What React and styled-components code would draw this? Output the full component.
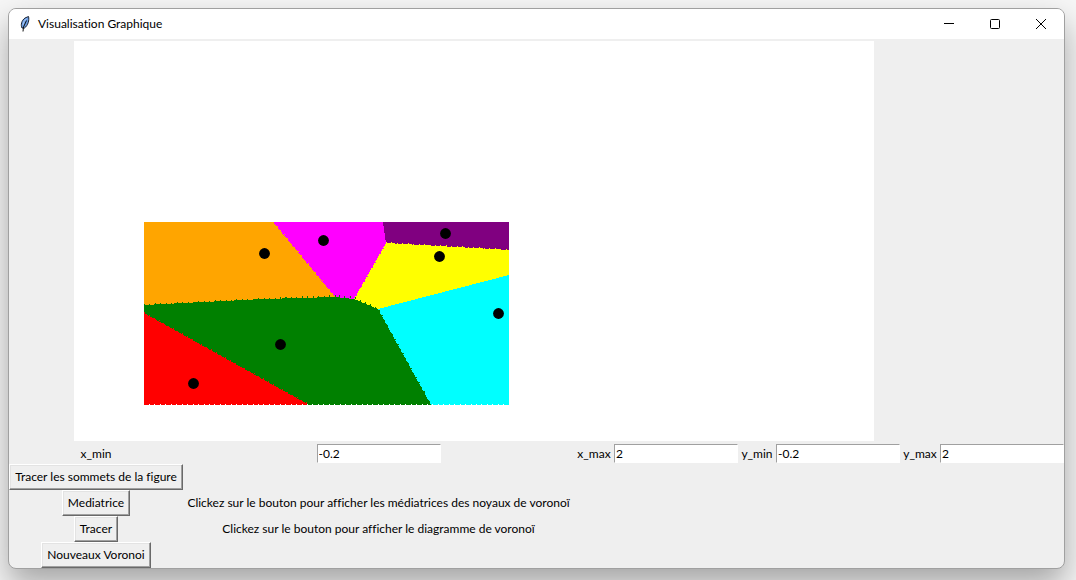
import React, { useState } from 'react'
import styled, { createGlobalStyle } from 'styled-components';

const GlobalStyle = createGlobalStyle`
    * {
        box-sizing: border-box;
    }
    body {
        margin: 0;
        background: #f6f6f6;
        overflow: hidden;
        font-family: Lato, "Open Sans", sans-serif;
        font-size: 12px;
        font-variant-ligatures: none;
        color: #000;
    }
`;

const Desktop = styled.div`
    min-height: 100vh;
    padding: 8px 11px 11px 8px;
`;

const Window = styled.main`
    border: 1px solid #a0a0a0;
    border-radius: 8px;
    overflow: hidden;
    background: #efefef;
    box-shadow: 0 16px 32px rgba(0, 0, 0, 0.33);
`;

const TitleBar = styled.header`
    display: flex;
    align-items: center;
    height: 30px;
    padding-left: 9px;
    gap: 6px;
    background: #fff;
`;

const Title = styled.h1`
    flex: 1;
    margin: 0;
    font-size: 12px;
    font-weight: 400;
    line-height: 16px;
`;

const WindowControls = styled.div`
    display: flex;
`;

const WindowButton = styled.button`
    display: flex;
    align-items: center;
    justify-content: center;
    width: 46px;
    height: 30px;
    padding: 0;
    border: none;
    background: transparent;
`;

const Grid = styled.div`
    display: grid;
    grid-template-columns: 174px minmax(0, 1fr) 40px 124px 38px 124px 40px 124px;
    grid-template-rows: auto 21px repeat(4, 26px);
    align-items: center;
    justify-items: center;
`;

const Canvas = styled.div`
    grid-column: 1 / span 7;
    padding: 2px 4px 2px 2px;
    svg {
        display: block;
        width: 800px;
        max-width: 100%;
        background: #fff;
    }
`;

const Label = styled.label`
    line-height: 16px;
    white-space: nowrap;
`;

const Entry = styled.input`
    width: 124px;
    height: 19px;
    padding: 0 1px;
    border: 1px solid #fff;
    border-top-color: #a0a0a0;
    border-left-color: #a0a0a0;
    background: #fff;
    font: inherit;
    outline: none;
`;

const PushButton = styled.button`
    grid-column: 1;
    height: 26px;
    padding: 0 5px;
    border: 1px solid #696969;
    border-top-color: #fff;
    border-left-color: #fff;
    background: #efefef;
    box-shadow: inset -1px -1px 0 #a0a0a0, inset 1px 1px 0 #e3e3e3;
    color: #000;
    font: inherit;
    line-height: 16px;
    white-space: nowrap;
`;

const Hint = styled.p`
    grid-column: 2;
    margin: 0;
    line-height: 16px;
    white-space: nowrap;
`;

const regions = [
    { color: "green", points: "70,264 190,258 265,255 281,257 304,268 357,364 234,364 70,272" },
    { color: "orange", points: "70,181 199,181 261,256 190,258 70,264" },
    { color: "red", points: "70,272 235,364 70,364" },
    { color: "magenta", points: "199,181 309,181 312,202 280,258 261,256" },
    { color: "purple", points: "309,181 435,181 435,209 312,202" },
    { color: "yellow", points: "312,202 435,209 435,234 304,268 280,258" },
    { color: "cyan", points: "304,268 435,234 435,364 357,364" },
];

const teeth = [
    { color: "green", points: "70,264 190,258 265,255" },
    { color: "green", points: "265,255 281,257 304,268 357,364" },
    { color: "red", points: "70,272 235,364" },
    { color: "orange", points: "199,181 261,256" },
    { color: "magenta", points: "312,202 280,258" },
    { color: "yellow", points: "312,202 435,209" },
    { color: "white", points: "75,363.5 435,363.5" },
];

const sites = [[190, 212], [249, 199], [371, 192], [365, 215], [424, 272], [206, 303], [119, 342]];

function VoronoiCanvas() {
    return (
        <Canvas>
            <svg viewBox="0 0 800 400" role="img" aria-label="Diagramme de Voronoï">
                <g shapeRendering="crispEdges">
                    {regions.map((region) =>
                        <polygon key={region.color} points={region.points} fill={region.color} />
                    )}
                    {teeth.map((line) =>
                        <polyline key={line.points} points={line.points} fill="none" stroke={line.color}
                            strokeWidth={line.color == "white" ? 1 : 2} strokeDasharray="1 4.45" />
                    )}
                </g>
                {sites.map(([x, y]) => <circle key={x} cx={x + 0.5} cy={y + 0.5} r="5.4" />)}
            </svg>
        </Canvas>
    )
}

function FeatherIcon() {
    return (
        <svg width="14" height="16" viewBox="0 0 14 16" aria-hidden="true">
            <path d="M4 12C2.500 9 3.500 4.500 7 2L10.500 0.500C11.500 4 10 9.500 6.500 12Z" fill="#6c9fe6" stroke="#1c2433" strokeWidth="1" />
            <path d="M5 9L6 5.500L8.500 2.500" fill="none" stroke="#a9c8f5" strokeWidth="1" />
            <path d="M8.500 4.500L5.500 11L5 15.500" fill="none" stroke="#111" strokeWidth="1" />
        </svg>
    )
}

export default function App() {

    const [bounds, setBounds] = useState({ x_min: "-0.2", x_max: "2", y_min: "-0.2", y_max: "2" });

    function boundChanged(e) {
        setBounds({ ...bounds, [e.target.name]: e.target.value });
    }

    return (
        <>
            <GlobalStyle />
            <Desktop>
                <Window>
                    <TitleBar>
                        <FeatherIcon />
                        <Title>Visualisation Graphique</Title>
                        <WindowControls>
                            <WindowButton type="button" aria-label="Réduire">
                                <svg width="10" height="10"><path d="M0 4.500H10" stroke="#000" /></svg>
                            </WindowButton>
                            <WindowButton type="button" aria-label="Agrandir">
                                <svg width="10" height="10"><rect x="0.5" y="0.5" width="9" height="9" rx="1" fill="none" stroke="#000" /></svg>
                            </WindowButton>
                            <WindowButton type="button" aria-label="Fermer">
                                <svg width="10" height="10"><path d="M0 0L10 10M10 0L0 10" stroke="#000" /></svg>
                            </WindowButton>
                        </WindowControls>
                    </TitleBar>
                    <Grid>
                        <VoronoiCanvas />
                        <div />
                        {Object.keys(bounds).map((name) =>
                            <React.Fragment key={name}>
                                <Label htmlFor={name}>{name}</Label>
                                <Entry id={name} name={name} value={bounds[name]} onChange={boundChanged} />
                            </React.Fragment>
                        )}
                        <PushButton type="button">Tracer les sommets de la figure</PushButton>
                        <PushButton type="button">Mediatrice</PushButton>
                        <Hint>Clickez sur le bouton pour afficher les médiatrices des noyaux de voronoï</Hint>
                        <PushButton type="button">Tracer</PushButton>
                        <Hint>Clickez sur le bouton pour afficher le diagramme de voronoï</Hint>
                        <PushButton type="button">Nouveaux Voronoi</PushButton>
                    </Grid>
                </Window>
            </Desktop>
        </>
    )
}
